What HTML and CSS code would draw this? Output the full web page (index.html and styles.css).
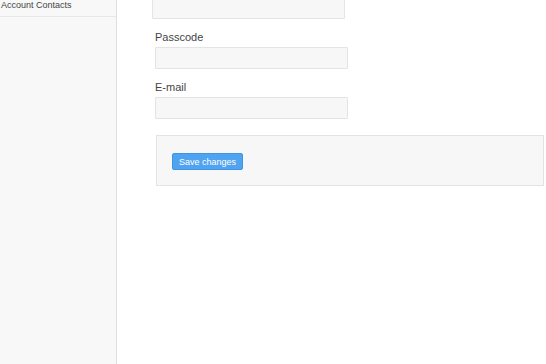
FILE: index.html
```html
<!DOCTYPE html>
<html lang="en">
<head>
    <meta charset="UTF-8">
    <meta name="viewport" content="width=device-width, initial-scale=1.0">
    <title>Account</title>
    <link rel="stylesheet" href="styles.css">
</head>
<body>

    <!-- sidebar -->
    <div class="sidebar">
        <div class="side-item">Account Contacts</div>
    </div>

    <!-- form -->
    <div class="main">
        <input class="input input-top" type="text">

        <label class="label">Passcode</label>
        <input class="input" type="password">

        <label class="label">E-mail</label>
        <input class="input" type="text">

        <div class="actions">
            <button class="btn">Save changes</button>
        </div>
    </div>

</body>
</html>
```

FILE: styles.css
```css
body {
    margin: 0;
    padding: 0;
    font-family: "Liberation Sans", Arial, sans-serif;
    color: #555;
    background: #fff;
    display: flex;
    height: 364px;
    overflow: hidden;
}

/* left menu */
.sidebar {
    width: 116px;
    flex-shrink: 0;
    background: #f8f8f8;
    border-right: 1px solid #dedede;
}

.side-item {
    margin-top: -5px;
    padding: 4px 1px 5px;
    font-size: 9px;
    line-height: 12px;
    color: #444;
    border-bottom: 1px solid #e8e8e8;
}

.main {
    flex: 1;
    padding: 0 2px 0 38px;
}

.input {
    display: block;
    box-sizing: border-box;
    width: 193px;
    height: 22px;
    margin: 0;
    background: #f7f7f7;
    border: 1px solid #e4e4e4;
    border-radius: 1px;
}

/* the first box sits a bit off */
.input-top {
    margin-top: -3px;
    margin-left: -3px;
}

.label {
    display: block;
    margin: 11px 0 3px;
    font-size: 11px;
    line-height: 14px;
    color: #444;
}

.actions {
    margin: 16px 0 0 1px;
    height: 51px;
    box-sizing: border-box;
    padding: 17px 15px 0;
    background: #f7f7f7;
    border: 1px solid #e3e3e3;
}

.btn {
    display: block;
    width: 71px;
    height: 17px;
    padding: 0;
    font-family: "Liberation Sans", Arial, sans-serif;
    font-size: 9px;
    color: #fff;
    background: #4fa3f1;
    border: 1px solid #3f95e4;
    border-radius: 2px;
    cursor: pointer;
}
```
